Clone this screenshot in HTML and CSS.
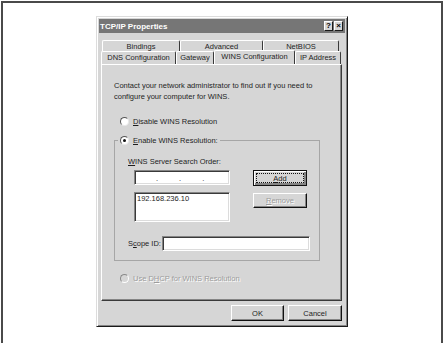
FILE: index.html
```html
<!DOCTYPE html>
<html lang="en">
<head>
  <meta charset="UTF-8" />
  <title>TCP/IP Properties</title>
  <link rel="stylesheet" href="styles.css">
</head>
<body>
  <div class="frame">
    <div class="dialog">
      <div class="titlebar">
        <span>TCP/IP Properties</span>
        <div class="title-btns">
          <span class="tbtn">?</span>
          <span class="tbtn">×</span>
        </div>
      </div>

      <div class="body">
        <div class="tabs tabs-back">
          <div class="tab t-bind">Bindings</div>
          <div class="tab t-adv">Advanced</div>
          <div class="tab t-nb">NetBIOS</div>
        </div>
        <div class="tabs tabs-front">
          <div class="tab t-dns">DNS Configuration</div>
          <div class="tab t-gw">Gateway</div>
          <div class="tab t-wins active">WINS Configuration</div>
          <div class="tab t-ip">IP Address</div>
        </div>

        <div class="panel">
          <p class="info">Contact your network administrator to find out if you need to<br>configure your computer for WINS.</p>

          <div class="opt opt-disable"><span class="radio"></span><span><u>D</u>isable WINS Resolution</span></div>

          <fieldset class="group">
            <legend class="opt"><span class="radio checked"></span><span><u>E</u>nable WINS Resolution:</span></legend>

            <div class="grp-label"><u>W</u>INS Server Search Order:</div>

            <div class="entry">
              <div class="field ip"><span>.</span><span>.</span><span>.</span></div>
              <div class="btn focus"><u>A</u>dd</div>
              <div class="field list">192.168.236.10</div>
              <div class="btn disabled remove"><u>R</u>emove</div>
            </div>

            <div class="scope">
              <span class="scope-label">S<u>c</u>ope ID:</span>
              <div class="field scope-input"></div>
            </div>
          </fieldset>

          <div class="opt opt-dhcp disabled"><span class="radio"></span><span>Use D<u>H</u>CP for WINS Resolution</span></div>
        </div>

        <div class="actions">
          <div class="btn ok">OK</div>
          <div class="btn cancel">Cancel</div>
        </div>
      </div>
    </div>
  </div>
</body>
</html>
```

FILE: styles.css
```css
* {
  margin: 0;
  padding: 0;
  box-sizing: border-box;
}

body {
  background: #fff;
  font-family: 'Liberation Sans', Arial, sans-serif;
  font-size: 7.5px;
  color: #1e1e1e;
  overflow: hidden;
}

.frame {
  margin: 1px 1px 0;
  height: 342px;
  border: 2px solid #4a4a4a;
  border-bottom: none;
  padding: 13px 0 0 93px;
}

.dialog {
  width: 252px;
  height: 311px;
  background: #d6d6d6;
  border: 1px solid;
  border-color: #dcdcdc #1a1a1a #1a1a1a #dcdcdc;
  box-shadow: inset 1px 1px #fff, inset -1px -1px #858585;
  padding: 2px;
  display: flex;
  flex-direction: column;
}

/* title bar */
.titlebar {
  height: 14px;
  background: #767676;
  color: #fff;
  font-size: 8px;
  font-weight: bold;
  display: flex;
  align-items: center;
  justify-content: space-between;
  padding: 0 2px 0 1px;
}

.title-btns {
  display: flex;
  gap: 1px;
}

.tbtn {
  width: 9px;
  height: 10px;
  background: #d6d6d6;
  color: #000;
  border: 1px solid;
  border-color: #fff #1a1a1a #1a1a1a #fff;
  font-size: 8px;
  line-height: 8px;
  text-align: center;
}

.body {
  padding: 7px 3px 0 2px;
}

/* tabs */
.tabs {
  display: flex;
}

.tabs-back {
  height: 11px;
  margin-left: 1px;
}

.tabs-front {
  height: 13px;
}

.tab {
  border-top: 1px solid #fff;
  border-left: 1px solid #fff;
  border-right: 1px solid #3a3a3a;
  border-radius: 2px 2px 0 0;
  text-align: center;
  line-height: 11px;
  white-space: nowrap;
}

.tab.active {
  height: 14px;
  margin-top: -1px;
  line-height: 12px;
}

.t-bind { width: 78px; }
.t-adv { width: 83px; }
.t-nb { width: 76px; }
.t-dns { width: 75px; }
.t-gw { width: 38px; }
.t-wins { width: 81px; }
.t-ip { width: 46px; }

/* panel */
.panel {
  height: 237px;
  border: 1px solid;
  border-color: #fff #3a3a3a #3a3a3a #fff;
  box-shadow: inset -1px -1px #858585;
  padding: 15px 0 0 12px;
}

.info {
  line-height: 11px;
}

.opt {
  display: flex;
  align-items: center;
  gap: 4px;
  height: 11px;
  margin-left: 6px;
  line-height: 11px;
}

.opt-disable {
  margin-top: 14px;
}

.radio {
  width: 9px;
  height: 9px;
  border-radius: 50%;
  background: #fff;
  border: 1px solid;
  border-color: #555 #e8e8e8 #e8e8e8 #555;
  display: flex;
  align-items: center;
  justify-content: center;
}

.radio.checked::after {
  content: '';
  width: 3px;
  height: 3px;
  border-radius: 50%;
  background: #111;
}

.group {
  width: 206px;
  margin-top: 8px;
  border: 1px solid #a6a6a6;
  padding: 0 0 9px 0;
}

.group legend.opt {
  margin-left: 3px;
  padding: 0 2px;
}

.grp-label {
  margin-top: 10px;
  padding-left: 13px;
  line-height: 11px;
}

.entry {
  display: grid;
  grid-template-columns: 96px 54px;
  grid-template-rows: 16px 30px;
  column-gap: 23px;
  row-gap: 6px;
  margin: 3px 0 0 19px;
}

.field {
  background: #fff;
  border: 1px solid;
  border-color: #858585 #fff #fff #858585;
  box-shadow: inset 1px 1px #3a3a3a, inset -1px -1px #dcdcdc;
}

.ip {
  height: 15px;
  display: flex;
  gap: 21px;
  padding-left: 21px;
  line-height: 15px;
}

.list {
  padding: 0 2px;
  line-height: 11px;
}

.btn {
  height: 16px;
  background: #d6d6d6;
  border: 1px solid;
  border-color: #fff #111 #111 #fff;
  box-shadow: inset -1px -1px #858585;
  display: flex;
  align-items: center;
  justify-content: center;
}

.btn.focus {
  border: 1px solid #111;
  box-shadow: inset 1px 1px #fff, inset -2px -2px #858585;
  outline: 1px dotted #111;
  outline-offset: -4px;
}

.btn.remove {
  height: 15px;
  margin-top: 1px;
}

.disabled {
  color: #9c9c9c;
  text-shadow: 1px 1px #fff;
}

.scope {
  display: flex;
  align-items: center;
  margin-top: 14px;
  padding-left: 13px;
}

.scope-label {
  width: 34px;
}

.scope-input {
  width: 148px;
  height: 15px;
}

.opt-dhcp {
  margin-top: 12px;
}

.opt-dhcp .radio {
  background: #d6d6d6;
  border-color: #8a8a8a #fff #fff #8a8a8a;
}

/* bottom buttons */
.actions {
  display: flex;
  justify-content: flex-end;
  gap: 4px;
  margin-top: 4px;
}

.ok { width: 53px; }
.cancel { width: 54px; }
```
